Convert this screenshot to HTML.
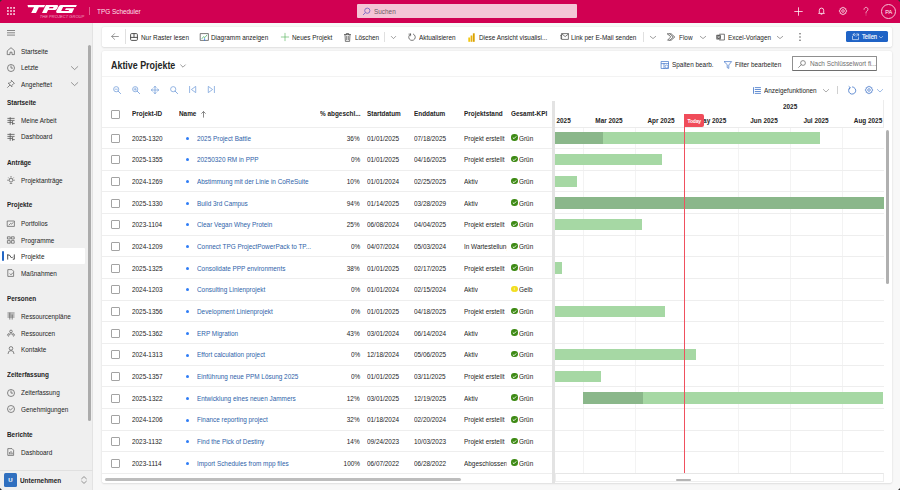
<!DOCTYPE html>
<html><head><meta charset="utf-8">
<style>
*{box-sizing:border-box;margin:0;padding:0}
html,body{width:900px;height:490px;overflow:hidden}
body{position:relative;background:#f8f8f8;font-family:"Liberation Sans",sans-serif;font-size:7.8px;color:#242424}
.abs{position:absolute}
.t{position:absolute;line-height:10px;margin-top:-4.6px;white-space:nowrap;transform:scaleX(.82);transform-origin:0 0}
.nt{transform:none}
.r{text-align:right;transform-origin:100% 0}
svg{position:absolute;overflow:visible}
#top{position:absolute;left:0;top:0;width:900px;height:22.5px;background:#d10052}
#search{position:absolute;left:357px;top:4px;width:220px;height:14px;background:#f4c5d6;border-radius:1px}
#side{position:absolute;left:0;top:22.5px;width:93px;height:467.5px;background:#efefef;border-right:1px solid #e3e3e3}
.sh{font-weight:bold}
#sel{position:absolute;left:0;top:247.8px;width:85px;height:16.6px;background:#fff;border-radius:1px}
#selbar{position:absolute;left:1.8px;top:251.4px;width:1.9px;height:9.8px;background:#2266c4;border-radius:1px}
#sscroll{position:absolute;left:88px;top:45px;width:3px;height:376px;background:#ababab;border-radius:2px}
.card{position:absolute;background:#fff;border-radius:1.8px;box-shadow:0 0 2px rgba(0,0,0,.10),0 1px 2px rgba(0,0,0,.08)}
.sep{position:absolute;width:1px;background:#e0e0e0}
.rline{position:absolute;left:102px;width:781.5px;height:1px;background:#eeeeee}
.cb{position:absolute;left:110.5px;width:9.2px;height:9.2px;border:0.85px solid #a3a3a3;border-radius:1px;background:#fff}
.dot{position:absolute;left:186px;width:3px;height:3px;border-radius:50%;background:#2f7df6}
.lk{color:#2e5fa9}
.kpi{position:absolute;left:511px;width:6.6px;height:6.6px;border-radius:50%}
.kpi.g{background:#3d8a14}
.kpi.y{background:#f2de1e}
.kpi svg{left:0;top:0}
.bar{position:absolute;height:11.4px;background:#a6d8a4}
.bar.dk{background:#8ab78a}
.gl{position:absolute;top:127px;width:1px;height:346px;background:#f3f3f3}
.ml{position:absolute;top:115.5px;width:60px;text-align:center;transform:scaleX(.82);line-height:10px;font-weight:bold;white-space:nowrap}
.hd{font-weight:bold}
.blueic{stroke:#5e8fd8}
</style></head><body>

<!-- TOP BAR -->
<div id="top"></div>
<svg style="left:7px;top:7px" width="8" height="8" viewBox="0 0 8 8" fill="#f6bcd2">
<rect x="0" y="0" width="1.8" height="1.8"/><rect x="3.1" y="0" width="1.8" height="1.8"/><rect x="6.2" y="0" width="1.8" height="1.8"/>
<rect x="0" y="3.1" width="1.8" height="1.8"/><rect x="3.1" y="3.1" width="1.8" height="1.8"/><rect x="6.2" y="3.1" width="1.8" height="1.8"/>
<rect x="0" y="6.2" width="1.8" height="1.8"/><rect x="3.1" y="6.2" width="1.8" height="1.8"/><rect x="6.2" y="6.2" width="1.8" height="1.8"/>
</svg>
<svg style="left:0;top:0" width="100" height="22" viewBox="0 0 100 22"><g transform="translate(0,12.9) skewX(-26.6) translate(0,-12.9)" fill="#fff">
<path d="M23.6 5.1H41.2V7.2H36V12.9H31.2V7.2H25.2Z"/>
<path d="M42 5.1H53.2A1.6 1.6 0 0 1 54.8 6.7V8.4A1.6 1.6 0 0 1 53.2 10H46.6V12.9H42ZM46.6 6.9V8.2H50.6V6.9Z"/>
<path d="M57.6 5.1H73V7.1H60.2V11H67.6V10H63.6V8.3H72V12.9H57.2A1.8 1.8 0 0 1 55.4 11.1V6.9A1.8 1.8 0 0 1 57.6 5.1Z"/>
</g></svg>
<div class="abs" style="left:39.8px;top:14.7px;font-size:4px;font-style:italic;color:#f0a9c3;letter-spacing:0.05px;line-height:4px;transform:scaleX(1.0);transform-origin:0 0">THE PROJECT GROUP</div>
<div class="abs" style="left:89px;top:6.5px;width:0.8px;height:8px;background:#e45c8d"></div>
<div class="t" style="left:97.2px;top:11.8px;color:#fbe3ec">TPG Scheduler</div>
<div id="search"></div>
<svg style="left:362px;top:7px" width="9" height="9" viewBox="0 0 9 9"><circle cx="5.3" cy="3.7" r="2.6" fill="none" stroke="#7a66c4" stroke-width="0.9"/><path d="M3.4 5.6 L1 8" stroke="#7a66c4" stroke-width="0.9"/></svg>
<div class="t" style="left:373.5px;top:11.6px;color:#6d5a63">Suchen</div>
<svg style="left:794px;top:7px" width="9" height="9" viewBox="0 0 9 9"><path d="M4.5 0.3V8.7M0.3 4.5H8.7" stroke="#fff" stroke-width="0.75"/></svg>
<svg style="left:817.5px;top:7px" width="7" height="8" viewBox="0 0 7 8"><path d="M1.3 5.8V3.3A2.2 2.2 0 0 1 5.7 3.3V5.8L6.4 6.4H0.6Z" fill="none" stroke="#fff" stroke-width="0.8"/><path d="M2.7 7.2H4.3" stroke="#fff" stroke-width="0.8"/></svg>
<svg style="left:839.3px;top:7.2px" width="8" height="8" viewBox="0 0 8 8"><path d="M3.3 0.4H4.7L5 1.4L6 0.9L7 1.9L6.5 2.9L7.6 3.3V4.7L6.5 5.1L7 6.1L6 7.1L5 6.6L4.7 7.6H3.3L3 6.6L2 7.1L1 6.1L1.5 5.1L0.4 4.7V3.3L1.5 2.9L1 1.9L2 0.9L3 1.4Z" fill="none" stroke="#fff" stroke-width="0.7" stroke-linejoin="round"/><circle cx="4" cy="4" r="1.3" fill="none" stroke="#fff" stroke-width="0.7"/></svg>
<svg style="left:863px;top:7px" width="6" height="9" viewBox="0 0 6 9"><path d="M1 2.4A2 2 0 1 1 4.2 3.9C3.3 4.5 3 4.9 3 6.1" fill="none" stroke="#fde8f0" stroke-width="0.7" stroke-linecap="round"/><circle cx="3" cy="7.9" r="0.45" fill="#fde8f0"/></svg>
<div class="abs" style="left:881px;top:3.7px;width:15.2px;height:15.2px;border-radius:50%;border:0.8px solid #f7c2d6"></div>
<div class="t nt" style="left:883px;top:11.4px;width:11.2px;text-align:center;color:#fff;font-size:5.6px;letter-spacing:-0.2px">PA</div>

<!-- SIDEBAR -->
<div id="side"></div>
<svg style="left:6.5px;top:29.8px" width="8" height="6" viewBox="0 0 8 6"><path d="M0 0.5H8M0 2.8H8M0 5.1H8" stroke="#6b6b6b" stroke-width="0.8"/></svg>
<svg style="left:6.5px;top:47.2px" width="8" height="8" viewBox="0 0 8 8"><path d="M0.6 3.6L4 0.7L7.4 3.6V7.6H5V5.2H3V7.6H0.6Z" fill="none" stroke="#575757" stroke-width="0.7" stroke-linecap="round" stroke-linejoin="round"/></svg>
<div class="t" style="left:20.8px;top:51.2px">Startseite</div>
<svg style="left:6.5px;top:63.7px" width="8" height="8" viewBox="0 0 8 8"><circle cx="4" cy="4" r="3.5" fill="none" stroke="#575757" stroke-width="0.7"/><path d="M4 1.9V4.1H5.6" fill="none" stroke="#575757" stroke-width="0.7" stroke-linecap="round" stroke-linejoin="round"/></svg>
<div class="t" style="left:20.8px;top:67.7px">Letzte</div>
<svg style="left:71.2px;top:65.9px" width="7" height="4" viewBox="0 0 7 4"><path d="M0.4 0.6L3.6 3.6L6.8 0.6" fill="none" stroke="#575757" stroke-width="0.6" stroke-linecap="round" stroke-linejoin="round"/></svg>
<svg style="left:6.5px;top:80.1px" width="8" height="8" viewBox="0 0 8 8"><path d="M4.6 0.6L7.4 3.4L6.4 3.8L4.9 5.3L4.9 6.8L1.2 3.1L2.7 3.1L4.2 1.6Z" fill="none" stroke="#575757" stroke-width="0.7" stroke-linecap="round" stroke-linejoin="round"/><path d="M2.9 5.1L0.6 7.4" fill="none" stroke="#575757" stroke-width="0.7" stroke-linecap="round" stroke-linejoin="round"/></svg>
<div class="t" style="left:20.8px;top:84.1px">Angeheftet</div>
<svg style="left:71.2px;top:82.3px" width="7" height="4" viewBox="0 0 7 4"><path d="M0.4 0.6L3.6 3.6L6.8 0.6" fill="none" stroke="#575757" stroke-width="0.6" stroke-linecap="round" stroke-linejoin="round"/></svg>
<div class="t sh" style="left:6.5px;top:102.4px">Startseite</div>
<svg style="left:6.5px;top:116.7px" width="8" height="8" viewBox="0 0 8 8"><path d="M0.8 1.4H7.2M0.8 3.4H7.2M0.8 5.4H5M3.2 0.6V7.4M5.6 4.4V7.4M5.6 6.6H7.4" fill="none" stroke="#575757" stroke-width="0.8" stroke-linecap="round" stroke-linejoin="round"/></svg>
<div class="t" style="left:20.8px;top:120.7px">Meine Arbeit</div>
<svg style="left:6.5px;top:132.9px" width="8" height="8" viewBox="0 0 8 8"><path d="M0.8 1.4H7.2M0.8 3.4H7.2M0.8 5.4H5M3.2 0.6V7.4M5.6 4.4V7.4M5.6 6.6H7.4" fill="none" stroke="#575757" stroke-width="0.8" stroke-linecap="round" stroke-linejoin="round"/></svg>
<div class="t" style="left:20.8px;top:136.9px">Dashboard</div>
<div class="t sh" style="left:6.5px;top:162.3px">Anträge</div>
<svg style="left:6.5px;top:176.3px" width="8" height="8" viewBox="0 0 8 8"><circle cx="4" cy="4.2" r="1.8" fill="none" stroke="#575757" stroke-width="0.7"/><path d="M4 0.4V1.3M0.6 4.2H1.4M6.6 4.2H7.4M1.6 1.8L2.2 2.4M6.4 1.8L5.8 2.4M3.2 7.4H4.8" fill="none" stroke="#575757" stroke-width="0.7" stroke-linecap="round" stroke-linejoin="round"/></svg>
<div class="t" style="left:20.8px;top:180.3px">Projektanträge</div>
<div class="t sh" style="left:6.5px;top:205px">Projekte</div>
<svg style="left:6.5px;top:219.7px" width="8" height="8" viewBox="0 0 8 8"><path d="M0.6 1H7.4V6.4H0.6Z" fill="none" stroke="#575757" stroke-width="0.7" stroke-linecap="round" stroke-linejoin="round"/><path d="M2 5L3.6 3.4L4.6 4.2L6 2.6" fill="none" stroke="#575757" stroke-width="0.7" stroke-linecap="round" stroke-linejoin="round"/></svg>
<div class="t" style="left:20.8px;top:223.7px">Portfolios</div>
<svg style="left:6.5px;top:236.3px" width="8" height="8" viewBox="0 0 8 8"><path d="M0.8 0.8H3.2V3H0.8ZM4.8 0.8H7.2V3H4.8ZM0.8 4.6H3.2V7.2H0.8ZM4.8 4.6H7.2V7.2H4.8Z" fill="none" stroke="#575757" stroke-width="0.7" stroke-linecap="round" stroke-linejoin="round"/></svg>
<div class="t" style="left:20.8px;top:240.3px">Programme</div>
<div id="sel"></div><div id="selbar"></div>
<svg style="left:6.5px;top:252.9px" width="8" height="8" viewBox="0 0 8 8"><path d="M0.7 1.8V6.2M0.7 2H2.4L4.6 5L5.6 4M7.3 1.8V6.2H6.2" fill="none" stroke="#404040" stroke-width="0.9" stroke-linecap="round" stroke-linejoin="round"/></svg>
<div class="t" style="left:20.8px;top:256.9px">Projekte</div>
<svg style="left:6.5px;top:269.4px" width="8" height="8" viewBox="0 0 8 8"><path d="M1.2 0.6H5L6.6 2.2V7.4H1.2Z" fill="none" stroke="#575757" stroke-width="0.7" stroke-linecap="round" stroke-linejoin="round"/><path d="M3 4.8L4 5.8L5.6 4" fill="none" stroke="#575757" stroke-width="0.7" stroke-linecap="round" stroke-linejoin="round"/></svg>
<div class="t" style="left:20.8px;top:273.4px">Maßnahmen</div>
<div class="t sh" style="left:6.5px;top:298.4px">Personen</div>
<svg style="left:6.5px;top:312.4px" width="8" height="8" viewBox="0 0 8 8"><path d="M0.8 1H7.2M0.8 3H7.2M0.8 5H7.2M2.8 1V7.2M5.2 3V7.2" fill="none" stroke="#575757" stroke-width="0.7" stroke-linecap="round" stroke-linejoin="round"/></svg>
<div class="t" style="left:20.8px;top:316.4px">Ressourcenpläne</div>
<svg style="left:6.5px;top:329.1px" width="8" height="8" viewBox="0 0 8 8"><circle cx="4" cy="2.4" r="1.3" fill="none" stroke="#575757" stroke-width="0.7"/><path d="M1.5 7.2A2.5 2.5 0 0 1 6.5 7.2M0.4 6.2A1.8 1.8 0 0 1 2 4.4M7.6 6.2A1.8 1.8 0 0 0 6 4.4" fill="none" stroke="#575757" stroke-width="0.7" stroke-linecap="round" stroke-linejoin="round"/></svg>
<div class="t" style="left:20.8px;top:333.1px">Ressourcen</div>
<svg style="left:6.5px;top:345.9px" width="8" height="8" viewBox="0 0 8 8"><circle cx="4" cy="2.4" r="1.8" fill="none" stroke="#575757" stroke-width="0.7"/><path d="M1 7.6A3 3 0 0 1 7 7.6" fill="none" stroke="#575757" stroke-width="0.7" stroke-linecap="round" stroke-linejoin="round"/></svg>
<div class="t" style="left:20.8px;top:349.9px">Kontakte</div>
<div class="t sh" style="left:6.5px;top:374.1px">Zeiterfassung</div>
<svg style="left:6.5px;top:389px" width="8" height="8" viewBox="0 0 8 8"><circle cx="4" cy="4" r="3.5" fill="none" stroke="#575757" stroke-width="0.7"/><path d="M4 1.9V4.1H5.6" fill="none" stroke="#575757" stroke-width="0.7" stroke-linecap="round" stroke-linejoin="round"/></svg>
<div class="t" style="left:20.8px;top:393px">Zeiterfassung</div>
<svg style="left:6.5px;top:405.3px" width="8" height="8" viewBox="0 0 8 8"><circle cx="4" cy="4" r="3.5" fill="none" stroke="#575757" stroke-width="0.7"/><path d="M2.4 4.1L3.5 5.1L5.7 2.9" fill="none" stroke="#575757" stroke-width="0.7" stroke-linecap="round" stroke-linejoin="round"/></svg>
<div class="t" style="left:20.8px;top:409.3px">Genehmigungen</div>
<div class="t sh" style="left:6.5px;top:434.8px">Berichte</div>
<svg style="left:6.5px;top:448.4px" width="8" height="8" viewBox="0 0 8 8"><path d="M1.2 0.6H5L6.6 2.2V7.4H1.2Z" fill="none" stroke="#575757" stroke-width="0.7" stroke-linecap="round" stroke-linejoin="round"/><path d="M2.6 6V4.4M4 6V3.4M5.2 6V5" fill="none" stroke="#575757" stroke-width="0.7" stroke-linecap="round" stroke-linejoin="round"/></svg>
<div class="t" style="left:20.8px;top:452.4px">Dashboard</div>
<div class="abs" style="left:0;top:469.5px;width:93px;height:1px;background:#e0e0e0"></div>
<div class="abs" style="left:4px;top:473.3px;width:13px;height:13.4px;background:#2f6fbf;border-radius:1.5px"></div>
<div class="t nt" style="left:4px;top:480px;width:13px;text-align:center;color:#fff;font-weight:bold;font-size:6px;letter-spacing:0">U</div>
<div class="t sh" style="left:20.3px;top:480.2px">Unternehmen</div>
<svg style="left:80.6px;top:476px" width="6" height="8" viewBox="0 0 6 8"><path d="M0.6 2.8L3 0.6L5.4 2.8M0.6 5.2L3 7.4L5.4 5.2" fill="none" stroke="#575757" stroke-width="0.6" stroke-linecap="round" stroke-linejoin="round"/></svg>
<div id="sscroll"></div>

<!-- COMMAND BAR -->
<div class="card" style="left:102px;top:27px;width:790px;height:20px"></div>
<svg style="left:110.8px;top:33.4px" width="8" height="7" viewBox="0 0 8 7"><path d="M7.4 3.5H0.8M3.6 0.6L0.7 3.5L3.6 6.4" fill="none" stroke="#707070" stroke-width="0.7" stroke-linecap="round" stroke-linejoin="round"/></svg>
<div class="sep" style="left:124.5px;top:29px;height:15px"></div>
<svg style="left:130px;top:32.7px" width="8" height="8" viewBox="0 0 8 8"><rect x="0.6" y="0.6" width="6.8" height="6.8" rx="1" fill="none" stroke="#4a4a4a" stroke-width="0.95"/><path d="M0.6 4.4H7.4M4 0.6V4.4" fill="none" stroke="#4a4a4a" stroke-width="0.95" stroke-linecap="round" stroke-linejoin="round"/></svg>
<div class="t" style="left:141.3px;top:37.6px;color:#242424">Nur Raster lesen</div>
<svg style="left:199.6px;top:32.8px" width="9" height="8" viewBox="0 0 9 8"><path d="M0.6 0.6H8.4V7.4H0.6Z" fill="none" stroke="#424242" stroke-width="0.7" stroke-linecap="round" stroke-linejoin="round"/><path d="M2 5.6L3.6 3.6L4.8 4.6L6.8 2.2" fill="none" stroke="#3aa655" stroke-width="0.7" stroke-linecap="round" stroke-linejoin="round"/><path d="M4.6 7.6V5.6" fill="none" stroke="#2c7be5" stroke-width="0.8" stroke-linecap="round" stroke-linejoin="round"/></svg>
<div class="t" style="left:211px;top:37.6px;color:#242424">Diagramm anzeigen</div>
<svg style="left:280.5px;top:33px" width="8" height="8" viewBox="0 0 8 8"><path d="M4 0.3V7.7M0.3 4H7.7" fill="none" stroke="#4caf50" stroke-width="0.6" stroke-linecap="round" stroke-linejoin="round"/></svg>
<div class="t" style="left:291.5px;top:37.6px;color:#242424">Neues Projekt</div>
<svg style="left:343.6px;top:32.6px" width="7" height="9" viewBox="0 0 7 9"><path d="M0.4 1.6H6.6M2.3 1.6V0.5H4.7V1.6M1 1.6L1.4 8.4H5.6L6 1.6M2.7 3.2V6.8M4.3 3.2V6.8" fill="none" stroke="#424242" stroke-width="0.7" stroke-linecap="round" stroke-linejoin="round"/></svg>
<div class="t" style="left:354.5px;top:37.6px;color:#242424">Löschen</div>
<div class="sep" style="left:383.5px;top:32px;height:9.5px"></div>
<svg style="left:390.6px;top:35.8px" width="5" height="3" viewBox="0 0 5 3"><path d="M0.3 0.4L2.5 2.6L4.7 0.4" fill="none" stroke="#616161" stroke-width="0.6" stroke-linecap="round" stroke-linejoin="round"/></svg>
<svg style="left:408px;top:33px" width="8" height="8" viewBox="0 0 8 8"><path d="M5.4 1.1A3.3 3.3 0 1 1 2.6 1.1" fill="none" stroke="#424242" stroke-width="0.7" stroke-linecap="round" stroke-linejoin="round"/><path d="M2.6 1.1H0.9M2.6 1.1V2.8" fill="none" stroke="#424242" stroke-width="0.6" stroke-linecap="round" stroke-linejoin="round"/></svg>
<div class="t" style="left:419.2px;top:37.6px;color:#242424">Aktualisieren</div>
<svg style="left:468px;top:32.5px" width="7" height="9" viewBox="0 0 7 9"><rect x="0.3" y="4.5" width="1.8" height="4.3" fill="#f2c811"/><rect x="2.6" y="2.5" width="1.8" height="6.3" fill="#e8b10f"/><rect x="4.9" y="0.3" width="1.8" height="8.5" fill="#d9a100"/></svg>
<div class="t" style="left:478.7px;top:37.6px;color:#242424">Diese Ansicht visualisi...</div>
<svg style="left:560.3px;top:33.4px" width="9" height="7" viewBox="0 0 9 7"><path d="M2 0.6H8.4V6.4H2ZM2 1L5.2 3.6L8.4 1" fill="none" stroke="#424242" stroke-width="0.7" stroke-linecap="round" stroke-linejoin="round"/><path d="M0.4 2.4H1.6M0.4 4H1.6M0.8 5.6H1.6" fill="none" stroke="#424242" stroke-width="0.6" stroke-linecap="round" stroke-linejoin="round"/></svg>
<div class="t" style="left:571.2px;top:37.6px;color:#242424">Link per E-Mail senden</div>
<div class="sep" style="left:643px;top:32px;height:9.5px"></div>
<svg style="left:649.8px;top:35.8px" width="6" height="3" viewBox="0 0 6 3"><path d="M0.3 0.4L3 2.6L5.7 0.4" fill="none" stroke="#616161" stroke-width="0.6" stroke-linecap="round" stroke-linejoin="round"/></svg>
<svg style="left:667.3px;top:33px" width="9" height="8" viewBox="0 0 9 8"><path d="M0.6 0.8H4.2L7.8 4L4.2 7.2H0.6L3.6 4ZM3 0.8L6.2 4L3 7.2" fill="none" stroke="#424242" stroke-width="0.7" stroke-linecap="round" stroke-linejoin="round"/></svg>
<div class="t" style="left:679px;top:37.6px;color:#242424">Flow</div>
<svg style="left:699.5px;top:35.8px" width="6" height="3" viewBox="0 0 6 3"><path d="M0.3 0.4L3 2.6L5.7 0.4" fill="none" stroke="#616161" stroke-width="0.6" stroke-linecap="round" stroke-linejoin="round"/></svg>
<svg style="left:716.3px;top:32.8px" width="9" height="8" viewBox="0 0 9 8"><path d="M3.6 1.2H8.4V7H3.6" fill="none" stroke="#424242" stroke-width="0.7" stroke-linecap="round" stroke-linejoin="round"/><rect x="0.3" y="1.8" width="4.6" height="4.6" fill="#5a5a5a" rx="0.4"/><path d="M1.5 3L3.7 5.2M3.7 3L1.5 5.2" fill="none" stroke="#fff" stroke-width="0.6" stroke-linecap="round" stroke-linejoin="round"/></svg>
<div class="t" style="left:727.5px;top:37.6px;color:#242424">Excel-Vorlagen</div>
<svg style="left:777px;top:35.8px" width="6" height="3" viewBox="0 0 6 3"><path d="M0.3 0.4L3 2.6L5.7 0.4" fill="none" stroke="#616161" stroke-width="0.6" stroke-linecap="round" stroke-linejoin="round"/></svg>
<svg style="left:798.9px;top:32.8px" width="2" height="8" viewBox="0 0 2 8"><circle cx="1" cy="0.8" r="0.7" fill="#424242"/><circle cx="1" cy="4" r="0.7" fill="#424242"/><circle cx="1" cy="7.2" r="0.7" fill="#424242"/></svg>
<div class="abs" style="left:846.1px;top:30.9px;width:41.6px;height:11.5px;background:#1f63c6;border-radius:1.6px"></div>
<svg style="left:851.9px;top:33px" width="7" height="7" viewBox="0 0 7 7"><path d="M0.5 3.2V6.6H6.5V4.6M1.2 1.6A1 1 0 1 0 3.2 1.6A1 1 0 1 0 1.2 1.6M4.2 3.4L6.4 1.2M4.6 1H6.6V3" fill="none" stroke="#fff" stroke-width="0.6" stroke-linecap="round" stroke-linejoin="round"/></svg>
<div class="t" style="left:862.3px;top:37px;color:#fff;-webkit-text-stroke:0.15px #fff;font-size:7.2px;transform:scaleX(.8)">Teilen</div>
<svg style="left:879.1px;top:36px" width="4" height="2.5" viewBox="0 0 4 2.5"><path d="M0.3 0.4L2 2L3.7 0.4" fill="none" stroke="#fff" stroke-width="0.5" stroke-linecap="round" stroke-linejoin="round"/></svg>

<!-- MAIN CARD -->
<div class="card" style="left:102px;top:51px;width:790px;height:432px"></div>
<div class="t" style="left:111px;top:66px;font-size:10px;font-weight:bold;line-height:12px;margin-top:-6px;transform:scaleX(.89)">Aktive Projekte</div>
<svg style="left:179.5px;top:63.6px" width="6" height="4" viewBox="0 0 6 4"><path d="M0.4 0.6L3 3.2L5.6 0.6" fill="none" stroke="#707070" stroke-width="0.7"/></svg>
<div class="abs" style="left:102px;top:76.3px;width:790px;height:1px;background:#f3f3f3"></div>
<svg style="left:661px;top:61px" width="8" height="8" viewBox="0 0 8 8"><path d="M0.5 0.5H7.5V7.5H0.5ZM0.5 2.6H7.5M3 2.6V7.5" fill="none" stroke="#3f73c8" stroke-width="0.7" stroke-linecap="round" stroke-linejoin="round"/><circle cx="5.6" cy="5.6" r="1.5" fill="#fff" stroke="#3f73c8" stroke-width="0.6"/></svg>
<div class="t" style="left:672.4px;top:64.8px;color:#242424">Spalten bearb.</div>
<svg style="left:723.8px;top:61px" width="8" height="8" viewBox="0 0 8 8"><path d="M0.4 0.6H7.6L4.8 4V7.4L3.2 6.6V4Z" fill="none" stroke="#3f73c8" stroke-width="0.7" stroke-linecap="round" stroke-linejoin="round"/></svg>
<div class="t" style="left:735.3px;top:64.8px;color:#242424">Filter bearbeiten</div>
<div class="abs" style="left:792.3px;top:56.4px;width:84.5px;height:14.4px;border:0.8px solid #8f8f8f;border-bottom-color:#6f6f6f;border-radius:1px"></div>
<svg style="left:798.2px;top:59.6px" width="8" height="8" viewBox="0 0 8 8"><circle cx="5" cy="3" r="2.4" fill="none" stroke="#616161" stroke-width="0.7"/><path d="M3.3 4.7L0.6 7.4" fill="none" stroke="#616161" stroke-width="0.7" stroke-linecap="round" stroke-linejoin="round"/></svg>
<div class="t" style="left:810px;top:63.8px;color:#6e6e6e">Nach Schlüsselwort fi...</div>
<svg style="left:112.9px;top:86px" width="8" height="8" viewBox="0 0 8 8"><circle cx="3.2" cy="3.2" r="2.6" fill="none" stroke="#7ba3dc" stroke-width="0.8"/><path d="M5.1 5.1L7.6 7.6" fill="none" stroke="#7ba3dc" stroke-width="0.9" stroke-linecap="round" stroke-linejoin="round"/><path d="M2 3.2H4.4" fill="none" stroke="#7ba3dc" stroke-width="0.7" stroke-linecap="round" stroke-linejoin="round"/></svg>
<svg style="left:132.1px;top:86px" width="8" height="8" viewBox="0 0 8 8"><circle cx="3.2" cy="3.2" r="2.6" fill="none" stroke="#7ba3dc" stroke-width="0.8"/><path d="M5.1 5.1L7.6 7.6" fill="none" stroke="#7ba3dc" stroke-width="0.9" stroke-linecap="round" stroke-linejoin="round"/><path d="M2 3.2H4.4M3.2 2V4.4" fill="none" stroke="#7ba3dc" stroke-width="0.7" stroke-linecap="round" stroke-linejoin="round"/></svg>
<svg style="left:151.1px;top:86px" width="8" height="8" viewBox="0 0 8 8"><path d="M4 0.4V7.6M0.4 4H7.6M2.8 1.4L4 0.4L5.2 1.4M2.8 6.6L4 7.6L5.2 6.6M1.4 2.8L0.4 4L1.4 5.2M6.6 2.8L7.6 4L6.6 5.2" fill="none" stroke="#7ba3dc" stroke-width="0.8" stroke-linecap="round" stroke-linejoin="round"/></svg>
<svg style="left:169.8px;top:86px" width="8" height="8" viewBox="0 0 8 8"><circle cx="3.2" cy="3.2" r="2.6" fill="none" stroke="#7ba3dc" stroke-width="0.8"/><path d="M5.1 5.1L7.6 7.6" fill="none" stroke="#7ba3dc" stroke-width="0.9" stroke-linecap="round" stroke-linejoin="round"/></svg>
<svg style="left:189px;top:86.3px" width="7" height="7" viewBox="0 0 7 7"><path d="M0.6 0.4V6.6M6.4 0.6L2.4 3.5L6.4 6.4Z" fill="none" stroke="#7ba3dc" stroke-width="0.8" stroke-linecap="round" stroke-linejoin="round"/></svg>
<svg style="left:208px;top:86.3px" width="7" height="7" viewBox="0 0 7 7"><path d="M6.4 0.4V6.6M0.6 0.6L4.6 3.5L0.6 6.4Z" fill="none" stroke="#7ba3dc" stroke-width="0.8" stroke-linecap="round" stroke-linejoin="round"/></svg>
<svg style="left:752.7px;top:86.6px" width="8" height="7" viewBox="0 0 8 7"><path d="M0.5 0.6V6.4M2.2 0.6H7.5M2.2 2.5H7.5M2.2 4.5H7.5M2.2 6.4H7.5" fill="none" stroke="#3f73c8" stroke-width="0.8" stroke-linecap="round" stroke-linejoin="round"/></svg>
<div class="t" style="left:763.7px;top:90.2px;color:#242424">Anzeigefunktionen</div>
<svg style="left:822.6px;top:88.8px" width="6" height="3.5" viewBox="0 0 6 3.5"><path d="M0.3 0.4L3 3L5.7 0.4" fill="none" stroke="#777" stroke-width="0.6" stroke-linecap="round" stroke-linejoin="round"/></svg>
<div class="sep" style="left:837.1px;top:86px;height:8px;background:#d0d0d0"></div>
<svg style="left:848px;top:86px" width="9" height="9" viewBox="0 0 9 9"><path d="M2 1.6A3.6 3.6 0 1 0 4.5 0.9M1 0.6L2.2 1.7L1.2 3" fill="none" stroke="#3f73c8" stroke-width="0.8" stroke-linecap="round" stroke-linejoin="round"/></svg>
<svg style="left:865.3px;top:86.2px" width="8" height="8" viewBox="0 0 8 8"><path d="M3.3 0.4H4.7L5 1.4L6 0.9L7 1.9L6.5 2.9L7.6 3.3V4.7L6.5 5.1L7 6.1L6 7.1L5 6.6L4.7 7.6H3.3L3 6.6L2 7.1L1 6.1L1.5 5.1L0.4 4.7V3.3L1.5 2.9L1 1.9L2 0.9L3 1.4Z" fill="none" stroke="#3f73c8" stroke-width="0.7" stroke-linejoin="round"/><circle cx="4" cy="4" r="1.3" fill="none" stroke="#3f73c8" stroke-width="0.7"/></svg>
<svg style="left:877px;top:88.8px" width="6" height="3.5" viewBox="0 0 6 3.5"><path d="M0.3 0.4L3 3L5.7 0.4" fill="none" stroke="#5f8fd5" stroke-width="0.6" stroke-linecap="round" stroke-linejoin="round"/></svg>

<!-- TABLE HEADER -->
<div class="cb" style="top:109.5px"></div>
<div class="t hd" style="left:131.5px;top:114px">Projekt-ID</div>
<div class="t hd" style="left:178.7px;top:114px">Name</div>
<svg style="left:200.5px;top:110.5px" width="5" height="7" viewBox="0 0 5 7"><path d="M2.5 6.6V0.6M0.4 2.6L2.5 0.5L4.6 2.6" fill="none" stroke="#555" stroke-width="0.7"/></svg>
<div class="t hd" style="left:320.2px;top:114px">% abgeschl...</div>
<div class="t hd" style="left:367.3px;top:114px">Startdatum</div>
<div class="t hd" style="left:414.1px;top:114px">Enddatum</div>
<div class="t hd" style="left:463.8px;top:114px">Projektstand</div>
<div class="t hd" style="left:510.9px;top:114px">Gesamt-KPI</div>
<div class="rline" style="top:127px"></div>

<!-- GANTT -->
<div class="abs" style="left:555px;top:100px;width:329px;height:374px;overflow:hidden">
</div>
<div class="gl" style="left:583.1px"></div>
<div class="gl" style="left:634.82px"></div>
<div class="gl" style="left:738.26px"></div>
<div class="gl" style="left:789.98px"></div>
<div class="gl" style="left:841.7px"></div>
<div class="abs" style="left:555px;top:100px;width:328.5px;height:0;"></div>
<div class="abs" style="left:555px;top:100px;width:328.5px;height:374px;overflow:hidden">
 <div style="position:absolute;left:-555px;top:-100px;width:900px;height:490px">
 <div class="ml" style="left:527.24px">Feb 2025</div>
<div class="ml" style="left:578.96px">Mar 2025</div>
<div class="ml" style="left:630.68px">Apr 2025</div>
<div class="ml" style="left:682.4px">May 2025</div>
<div class="ml" style="left:734.12px">Jun 2025</div>
<div class="ml" style="left:785.84px">Jul 2025</div>
<div class="ml" style="left:837.56px">Aug 2025</div>
 </div>
</div>
<div class="abs" style="left:883px;top:100px;width:1px;height:27px;background:#ececec"></div>
<div class="abs" style="left:555px;top:127px;width:328.5px;height:1px;background:#ececec"></div>
<div class="t hd" style="left:782.7px;top:107px">2025</div>
<div class="rline" style="top:147.95px"></div>
<div class="cb" style="top:133.6px"></div>
<div class="t" style="left:131.5px;top:138.3px">2025-1320</div>
<div class="dot" style="top:136.8px"></div>
<div class="t lk" style="left:196.6px;top:138.3px">2025 Project Battle</div>
<div class="t r" style="right:540.2px;top:138.3px">36%</div>
<div class="t" style="left:367.3px;top:138.3px">01/01/2025</div>
<div class="t" style="left:414px;top:138.3px">07/18/2025</div>
<div class="t st" style="left:463.8px;top:138.3px;width:51.5px;overflow:hidden">Projekt erstellt</div>
<div class="kpi g" style="top:134.2px"><svg width="7" height="7" viewBox="0 0 7 7"><path d="M1.8 3.6 L3 4.7 L5.2 2.4" stroke="#fff" stroke-width="0.9" fill="none"/></svg></div>
<div class="t" style="left:519px;top:138.3px">Grün</div>
<div class="bar" style="left:555px;width:265px;top:132.2px"></div>
<div class="bar dk" style="left:555px;width:47.6px;top:132.2px"></div>
<div class="rline" style="top:169.62px"></div>
<div class="cb" style="top:155.27px"></div>
<div class="t" style="left:131.5px;top:159.97px">2025-1355</div>
<div class="dot" style="top:158.47px"></div>
<div class="t lk" style="left:196.6px;top:159.97px">20250320 RM in PPP</div>
<div class="t r" style="right:540.2px;top:159.97px">0%</div>
<div class="t" style="left:367.3px;top:159.97px">01/01/2025</div>
<div class="t" style="left:414px;top:159.97px">04/16/2025</div>
<div class="t st" style="left:463.8px;top:159.97px;width:51.5px;overflow:hidden">Projekt erstellt</div>
<div class="kpi g" style="top:155.87px"><svg width="7" height="7" viewBox="0 0 7 7"><path d="M1.8 3.6 L3 4.7 L5.2 2.4" stroke="#fff" stroke-width="0.9" fill="none"/></svg></div>
<div class="t" style="left:519px;top:159.97px">Grün</div>
<div class="bar" style="left:555px;width:106.8px;top:153.87px"></div>
<div class="rline" style="top:191.29px"></div>
<div class="cb" style="top:176.94px"></div>
<div class="t" style="left:131.5px;top:181.64px">2024-1269</div>
<div class="dot" style="top:180.14px"></div>
<div class="t lk" style="left:196.6px;top:181.64px">Abstimmung mit der Linie in CoReSuite</div>
<div class="t r" style="right:540.2px;top:181.64px">10%</div>
<div class="t" style="left:367.3px;top:181.64px">01/01/2024</div>
<div class="t" style="left:414px;top:181.64px">02/25/2025</div>
<div class="t st" style="left:463.8px;top:181.64px;width:51.5px;overflow:hidden">Aktiv</div>
<div class="kpi g" style="top:177.54px"><svg width="7" height="7" viewBox="0 0 7 7"><path d="M1.8 3.6 L3 4.7 L5.2 2.4" stroke="#fff" stroke-width="0.9" fill="none"/></svg></div>
<div class="t" style="left:519px;top:181.64px">Grün</div>
<div class="bar" style="left:555px;width:22px;top:175.54px"></div>
<div class="rline" style="top:212.96px"></div>
<div class="cb" style="top:198.61px"></div>
<div class="t" style="left:131.5px;top:203.31px">2025-1330</div>
<div class="dot" style="top:201.81px"></div>
<div class="t lk" style="left:196.6px;top:203.31px">Build 3rd Campus</div>
<div class="t r" style="right:540.2px;top:203.31px">94%</div>
<div class="t" style="left:367.3px;top:203.31px">01/14/2025</div>
<div class="t" style="left:414px;top:203.31px">03/28/2029</div>
<div class="t st" style="left:463.8px;top:203.31px;width:51.5px;overflow:hidden">Aktiv</div>
<div class="kpi g" style="top:199.21px"><svg width="7" height="7" viewBox="0 0 7 7"><path d="M1.8 3.6 L3 4.7 L5.2 2.4" stroke="#fff" stroke-width="0.9" fill="none"/></svg></div>
<div class="t" style="left:519px;top:203.31px">Grün</div>
<div class="bar" style="left:555px;width:328.5px;top:197.21px"></div>
<div class="bar dk" style="left:555px;width:328.5px;top:197.21px"></div>
<div class="rline" style="top:234.63px"></div>
<div class="cb" style="top:220.28px"></div>
<div class="t" style="left:131.5px;top:224.98px">2023-1104</div>
<div class="dot" style="top:223.48px"></div>
<div class="t lk" style="left:196.6px;top:224.98px">Clear Vegan Whey Protein</div>
<div class="t r" style="right:540.2px;top:224.98px">25%</div>
<div class="t" style="left:367.3px;top:224.98px">06/08/2024</div>
<div class="t" style="left:414px;top:224.98px">04/04/2025</div>
<div class="t st" style="left:463.8px;top:224.98px;width:51.5px;overflow:hidden">Projekt erstellt</div>
<div class="kpi g" style="top:220.88px"><svg width="7" height="7" viewBox="0 0 7 7"><path d="M1.8 3.6 L3 4.7 L5.2 2.4" stroke="#fff" stroke-width="0.9" fill="none"/></svg></div>
<div class="t" style="left:519px;top:224.98px">Grün</div>
<div class="bar" style="left:555px;width:86.6px;top:218.88px"></div>
<div class="rline" style="top:256.3px"></div>
<div class="cb" style="top:241.95px"></div>
<div class="t" style="left:131.5px;top:246.65px">2024-1209</div>
<div class="dot" style="top:245.15px"></div>
<div class="t lk" style="left:196.6px;top:246.65px">Connect TPG ProjectPowerPack to TP...</div>
<div class="t r" style="right:540.2px;top:246.65px">0%</div>
<div class="t" style="left:367.3px;top:246.65px">04/07/2024</div>
<div class="t" style="left:414px;top:246.65px">05/03/2024</div>
<div class="t st" style="left:463.8px;top:246.65px;width:51.5px;overflow:hidden">In Wartestellung</div>
<div class="kpi g" style="top:242.55px"><svg width="7" height="7" viewBox="0 0 7 7"><path d="M1.8 3.6 L3 4.7 L5.2 2.4" stroke="#fff" stroke-width="0.9" fill="none"/></svg></div>
<div class="t" style="left:519px;top:246.65px">Grün</div>
<div class="rline" style="top:277.97px"></div>
<div class="cb" style="top:263.62px"></div>
<div class="t" style="left:131.5px;top:268.32px">2025-1325</div>
<div class="dot" style="top:266.82px"></div>
<div class="t lk" style="left:196.6px;top:268.32px">Consolidate PPP environments</div>
<div class="t r" style="right:540.2px;top:268.32px">38%</div>
<div class="t" style="left:367.3px;top:268.32px">01/01/2025</div>
<div class="t" style="left:414px;top:268.32px">02/17/2025</div>
<div class="t st" style="left:463.8px;top:268.32px;width:51.5px;overflow:hidden">Projekt erstellt</div>
<div class="kpi g" style="top:264.22px"><svg width="7" height="7" viewBox="0 0 7 7"><path d="M1.8 3.6 L3 4.7 L5.2 2.4" stroke="#fff" stroke-width="0.9" fill="none"/></svg></div>
<div class="t" style="left:519px;top:268.32px">Grün</div>
<div class="bar" style="left:555px;width:7px;top:262.22px"></div>
<div class="rline" style="top:299.64px"></div>
<div class="cb" style="top:285.29px"></div>
<div class="t" style="left:131.5px;top:289.99px">2024-1203</div>
<div class="dot" style="top:288.49px"></div>
<div class="t lk" style="left:196.6px;top:289.99px">Consulting Linienprojekt</div>
<div class="t r" style="right:540.2px;top:289.99px">0%</div>
<div class="t" style="left:367.3px;top:289.99px">01/01/2024</div>
<div class="t" style="left:414px;top:289.99px">02/15/2024</div>
<div class="t st" style="left:463.8px;top:289.99px;width:51.5px;overflow:hidden">Aktiv</div>
<div class="kpi y" style="top:285.89px"><svg width="7" height="7" viewBox="0 0 7 7"><path d="M3.3 1.6V4.2M3.3 5.1V5.4" stroke="#fbf3a8" stroke-width="0.8" fill="none"/></svg></div>
<div class="t" style="left:519px;top:289.99px">Gelb</div>
<div class="rline" style="top:321.31px"></div>
<div class="cb" style="top:306.96px"></div>
<div class="t" style="left:131.5px;top:311.66px">2025-1356</div>
<div class="dot" style="top:310.16px"></div>
<div class="t lk" style="left:196.6px;top:311.66px">Development Linienprojekt</div>
<div class="t r" style="right:540.2px;top:311.66px">0%</div>
<div class="t" style="left:367.3px;top:311.66px">01/01/2025</div>
<div class="t" style="left:414px;top:311.66px">04/18/2025</div>
<div class="t st" style="left:463.8px;top:311.66px;width:51.5px;overflow:hidden">Projekt erstellt</div>
<div class="kpi g" style="top:307.56px"><svg width="7" height="7" viewBox="0 0 7 7"><path d="M1.8 3.6 L3 4.7 L5.2 2.4" stroke="#fff" stroke-width="0.9" fill="none"/></svg></div>
<div class="t" style="left:519px;top:311.66px">Grün</div>
<div class="bar" style="left:555px;width:110.3px;top:305.56px"></div>
<div class="rline" style="top:342.98px"></div>
<div class="cb" style="top:328.63px"></div>
<div class="t" style="left:131.5px;top:333.33px">2025-1362</div>
<div class="dot" style="top:331.83px"></div>
<div class="t lk" style="left:196.6px;top:333.33px">ERP Migration</div>
<div class="t r" style="right:540.2px;top:333.33px">43%</div>
<div class="t" style="left:367.3px;top:333.33px">03/01/2024</div>
<div class="t" style="left:414px;top:333.33px">06/14/2024</div>
<div class="t st" style="left:463.8px;top:333.33px;width:51.5px;overflow:hidden">Aktiv</div>
<div class="kpi g" style="top:329.23px"><svg width="7" height="7" viewBox="0 0 7 7"><path d="M1.8 3.6 L3 4.7 L5.2 2.4" stroke="#fff" stroke-width="0.9" fill="none"/></svg></div>
<div class="t" style="left:519px;top:333.33px">Grün</div>
<div class="rline" style="top:364.65px"></div>
<div class="cb" style="top:350.3px"></div>
<div class="t" style="left:131.5px;top:355px">2024-1313</div>
<div class="dot" style="top:353.5px"></div>
<div class="t lk" style="left:196.6px;top:355px">Effort calculation project</div>
<div class="t r" style="right:540.2px;top:355px">0%</div>
<div class="t" style="left:367.3px;top:355px">12/18/2024</div>
<div class="t" style="left:414px;top:355px">05/06/2025</div>
<div class="t st" style="left:463.8px;top:355px;width:51.5px;overflow:hidden">Aktiv</div>
<div class="kpi g" style="top:350.9px"><svg width="7" height="7" viewBox="0 0 7 7"><path d="M1.8 3.6 L3 4.7 L5.2 2.4" stroke="#fff" stroke-width="0.9" fill="none"/></svg></div>
<div class="t" style="left:519px;top:355px">Grün</div>
<div class="bar" style="left:555px;width:141px;top:348.9px"></div>
<div class="rline" style="top:386.32px"></div>
<div class="cb" style="top:371.97px"></div>
<div class="t" style="left:131.5px;top:376.67px">2025-1357</div>
<div class="dot" style="top:375.17px"></div>
<div class="t lk" style="left:196.6px;top:376.67px">Einführung neue PPM Lösung 2025</div>
<div class="t r" style="right:540.2px;top:376.67px">0%</div>
<div class="t" style="left:367.3px;top:376.67px">01/01/2025</div>
<div class="t" style="left:414px;top:376.67px">03/11/2025</div>
<div class="t st" style="left:463.8px;top:376.67px;width:51.5px;overflow:hidden">Projekt erstellt</div>
<div class="kpi g" style="top:372.57px"><svg width="7" height="7" viewBox="0 0 7 7"><path d="M1.8 3.6 L3 4.7 L5.2 2.4" stroke="#fff" stroke-width="0.9" fill="none"/></svg></div>
<div class="t" style="left:519px;top:376.67px">Grün</div>
<div class="bar" style="left:555px;width:46px;top:370.57px"></div>
<div class="rline" style="top:407.99px"></div>
<div class="cb" style="top:393.64px"></div>
<div class="t" style="left:131.5px;top:398.34px">2025-1322</div>
<div class="dot" style="top:396.84px"></div>
<div class="t lk" style="left:196.6px;top:398.34px">Entwicklung eines neuen Jammers</div>
<div class="t r" style="right:540.2px;top:398.34px">12%</div>
<div class="t" style="left:367.3px;top:398.34px">03/01/2025</div>
<div class="t" style="left:414px;top:398.34px">12/19/2025</div>
<div class="t st" style="left:463.8px;top:398.34px;width:51.5px;overflow:hidden">Aktiv</div>
<div class="kpi g" style="top:394.24px"><svg width="7" height="7" viewBox="0 0 7 7"><path d="M1.8 3.6 L3 4.7 L5.2 2.4" stroke="#fff" stroke-width="0.9" fill="none"/></svg></div>
<div class="t" style="left:519px;top:398.34px">Grün</div>
<div class="bar" style="left:583.3px;width:300.2px;top:392.24px"></div>
<div class="bar dk" style="left:583.3px;width:59.5px;top:392.24px"></div>
<div class="rline" style="top:429.66px"></div>
<div class="cb" style="top:415.31px"></div>
<div class="t" style="left:131.5px;top:420.01px">2024-1206</div>
<div class="dot" style="top:418.51px"></div>
<div class="t lk" style="left:196.6px;top:420.01px">Finance reporting project</div>
<div class="t r" style="right:540.2px;top:420.01px">32%</div>
<div class="t" style="left:367.3px;top:420.01px">01/18/2024</div>
<div class="t" style="left:414px;top:420.01px">02/20/2024</div>
<div class="t st" style="left:463.8px;top:420.01px;width:51.5px;overflow:hidden">Projekt erstellt</div>
<div class="kpi g" style="top:415.91px"><svg width="7" height="7" viewBox="0 0 7 7"><path d="M1.8 3.6 L3 4.7 L5.2 2.4" stroke="#fff" stroke-width="0.9" fill="none"/></svg></div>
<div class="t" style="left:519px;top:420.01px">Grün</div>
<div class="rline" style="top:451.33px"></div>
<div class="cb" style="top:436.98px"></div>
<div class="t" style="left:131.5px;top:441.68px">2023-1132</div>
<div class="dot" style="top:440.18px"></div>
<div class="t lk" style="left:196.6px;top:441.68px">Find the Pick of Destiny</div>
<div class="t r" style="right:540.2px;top:441.68px">14%</div>
<div class="t" style="left:367.3px;top:441.68px">09/24/2023</div>
<div class="t" style="left:414px;top:441.68px">10/03/2023</div>
<div class="t st" style="left:463.8px;top:441.68px;width:51.5px;overflow:hidden">Projekt erstellt</div>
<div class="kpi g" style="top:437.58px"><svg width="7" height="7" viewBox="0 0 7 7"><path d="M1.8 3.6 L3 4.7 L5.2 2.4" stroke="#fff" stroke-width="0.9" fill="none"/></svg></div>
<div class="t" style="left:519px;top:441.68px">Grün</div>
<div class="rline" style="top:473px"></div>
<div class="cb" style="top:458.65px"></div>
<div class="t" style="left:131.5px;top:463.35px">2023-1114</div>
<div class="dot" style="top:461.85px"></div>
<div class="t lk" style="left:196.6px;top:463.35px">Import Schedules from mpp files</div>
<div class="t r" style="right:540.2px;top:463.35px">100%</div>
<div class="t" style="left:367.3px;top:463.35px">06/07/2022</div>
<div class="t" style="left:414px;top:463.35px">06/28/2022</div>
<div class="t st" style="left:463.8px;top:463.35px;width:51.5px;overflow:hidden">Abgeschlossen</div>
<div class="kpi g" style="top:459.25px"><svg width="7" height="7" viewBox="0 0 7 7"><path d="M1.8 3.6 L3 4.7 L5.2 2.4" stroke="#fff" stroke-width="0.9" fill="none"/></svg></div>
<div class="t" style="left:519px;top:463.35px">Grün</div>
<div class="abs" style="left:552px;top:100.5px;width:2.6px;height:382px;background:#e3e3e3"></div>
<div class="abs" style="left:684.2px;top:114px;width:1px;height:360px;background:#f0505e"></div>
<div class="abs" style="left:684px;top:114px;width:20.4px;height:12.6px;background:#f04c5a;border-radius:0 2px 2px 0"></div>
<div class="t nt" style="left:684px;top:120.3px;width:20.4px;text-align:center;color:#fff;font-size:5px;font-weight:bold;letter-spacing:-0.15px">Today</div>
<div class="abs" style="left:886.2px;top:130px;width:2.8px;height:154px;background:#b0b0b0;border-radius:2px"></div>
<div class="abs" style="left:105px;top:478px;width:356px;height:3px;background:#bdbdbd;border-radius:2px"></div>
<div class="abs" style="left:555px;top:473.2px;width:328.5px;height:8.8px;border:1px solid #eeeeee;border-top-color:#e6e6e6"></div>
<div class="abs" style="left:676.4px;top:478.6px;width:14.6px;height:2px;background:#b5b5b5;border-radius:1px"></div>
<div class="abs" style="left:0;top:0;width:0;height:0;border-top:2px solid #333;border-right:2px solid transparent"></div>
<div class="abs" style="right:0;top:0;width:0;height:0;border-top:2px solid #333;border-left:2px solid transparent"></div>
<div class="abs" style="left:0;bottom:0;width:0;height:0;border-bottom:2px solid #333;border-right:2px solid transparent"></div>
<div class="abs" style="right:0;bottom:0;width:0;height:0;border-bottom:2px solid #333;border-left:2px solid transparent"></div>
</body></html>
